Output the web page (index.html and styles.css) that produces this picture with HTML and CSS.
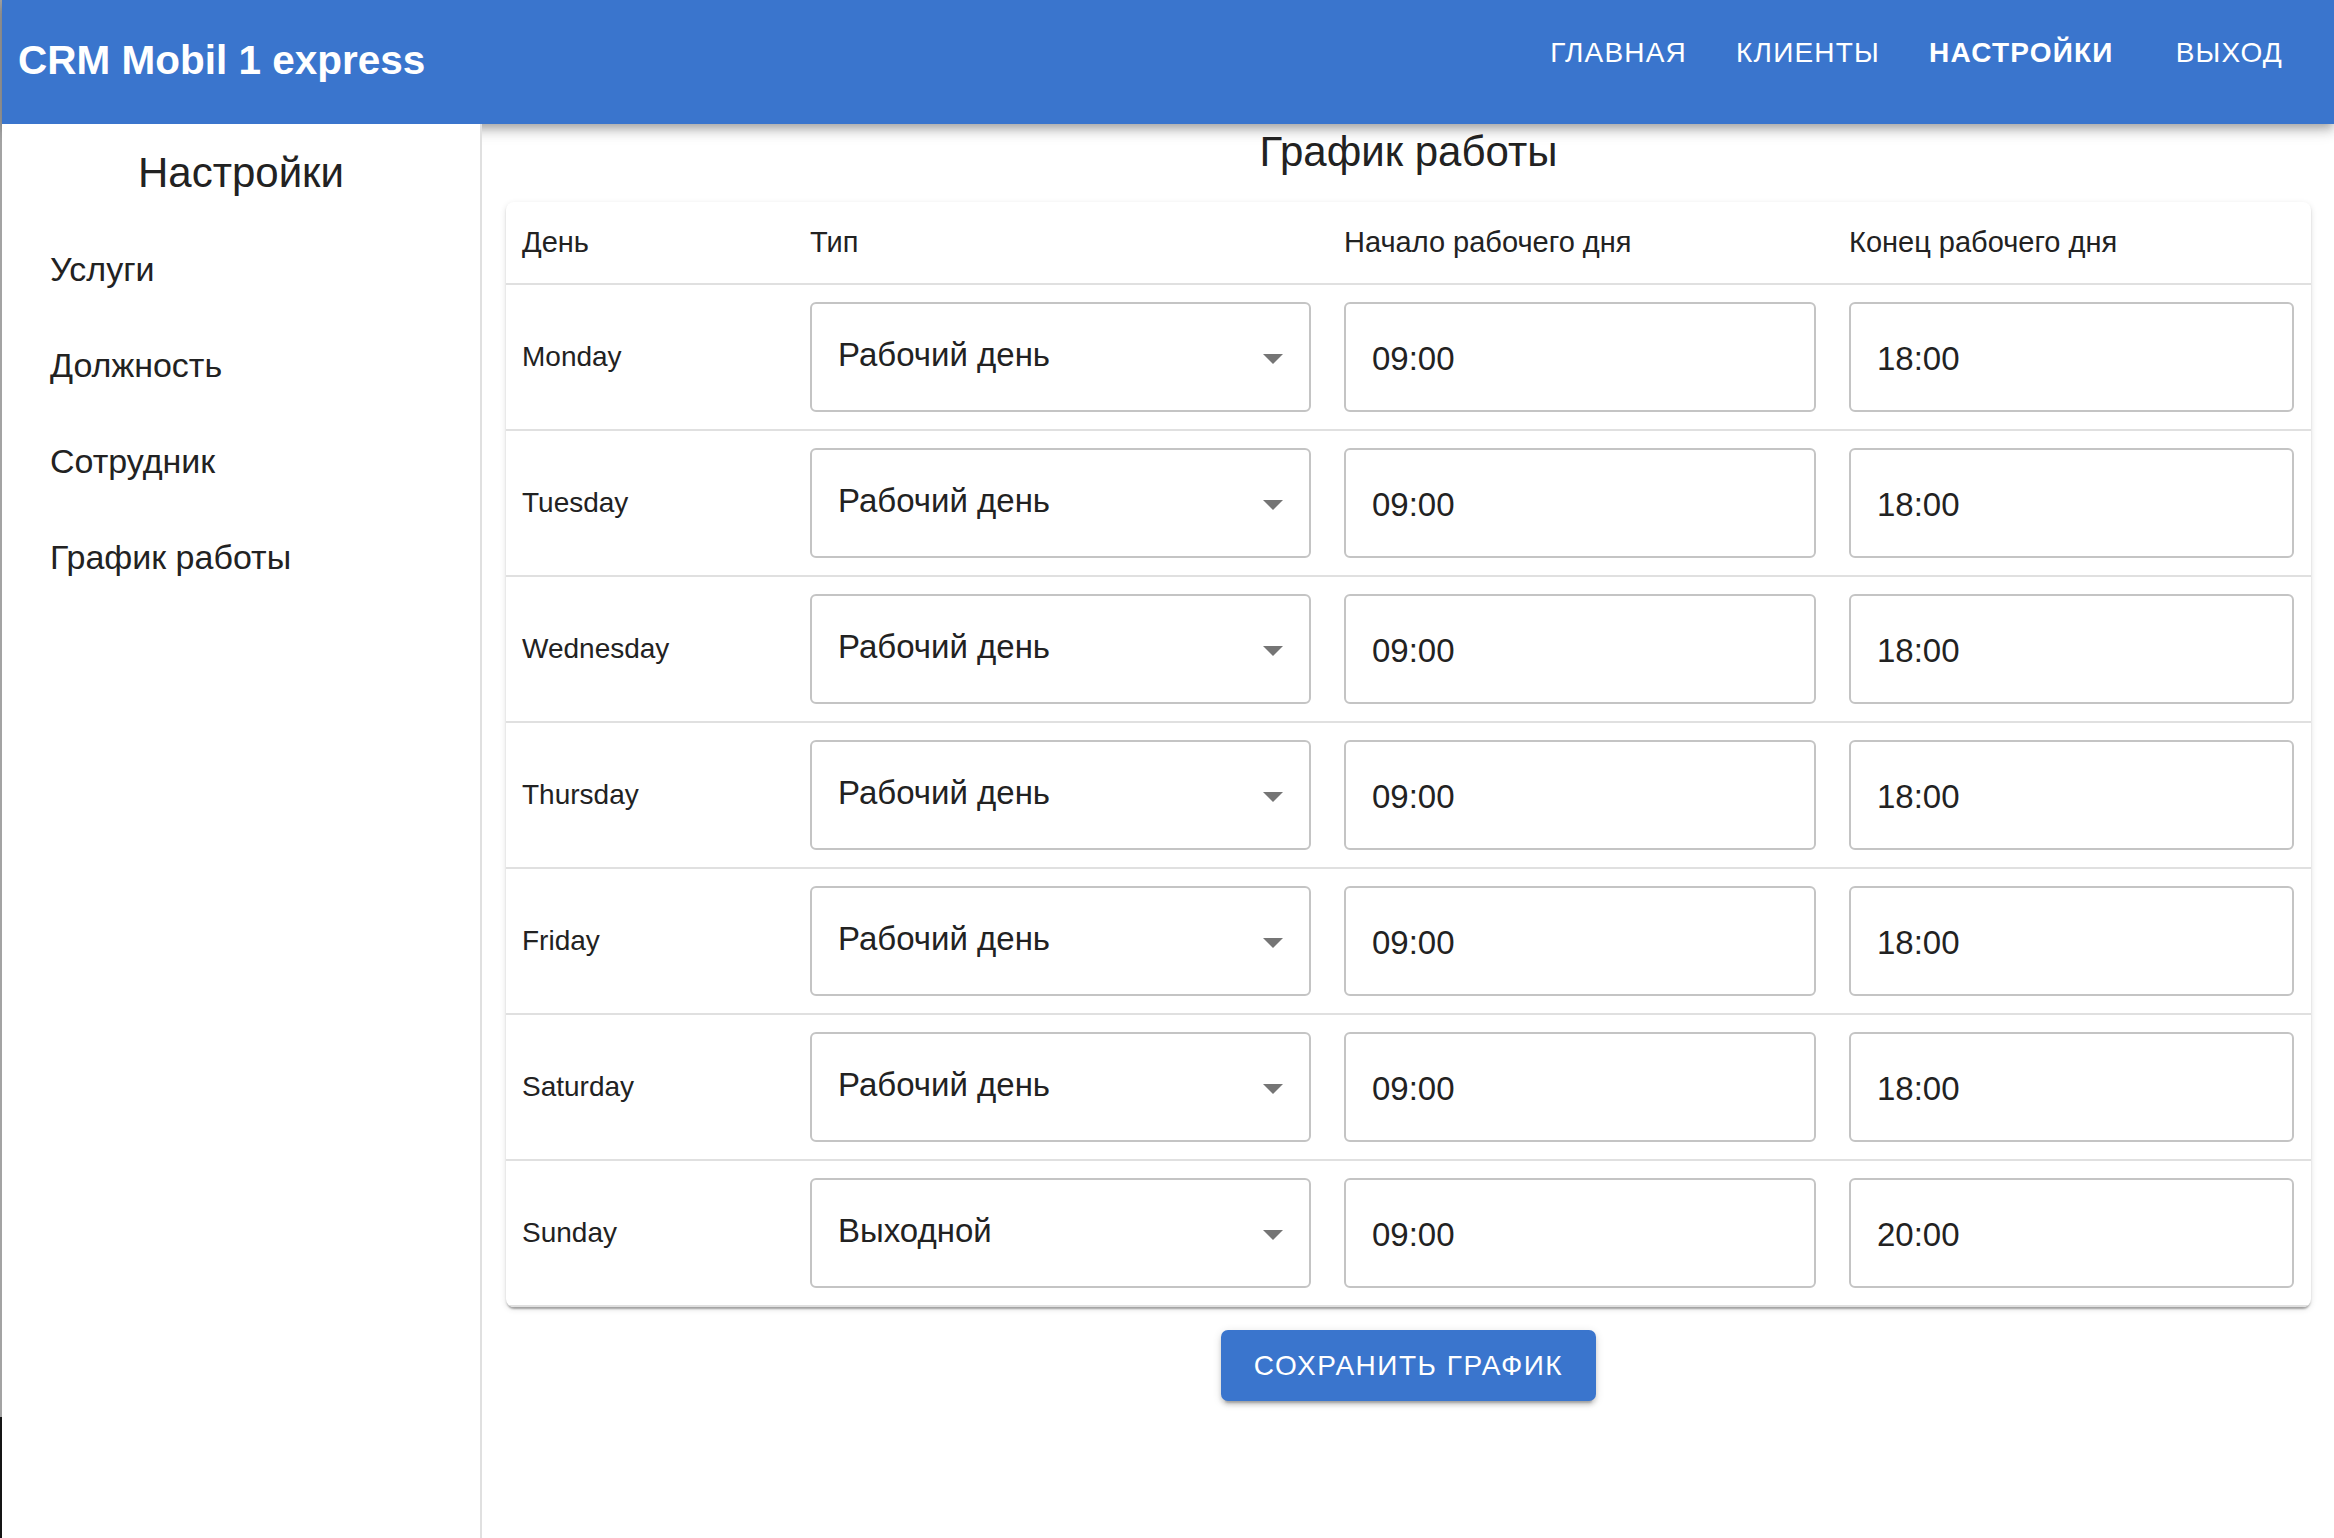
FILE: index.html
```html
<!DOCTYPE html>
<html lang="ru">
<head>
<meta charset="utf-8">
<title>CRM Mobil 1 express</title>
<link rel="stylesheet" href="styles.css">
</head>
<body>
<div class="app">
  <header class="appbar">
    <div class="brand">CRM Mobil 1 express</div>
    <nav class="nav">
      <a class="nav-item">ГЛАВНАЯ</a>
      <a class="nav-item">КЛИЕНТЫ</a>
      <a class="nav-item active">НАСТРОЙКИ</a>
      <a class="nav-item logout">ВЫХОД</a>
    </nav>
  </header>
  <div class="content">
    <aside class="sidebar">
      <div class="side-title">Настройки</div>
      <ul class="side-menu">
        <li>Услуги</li>
        <li>Должность</li>
        <li>Сотрудник</li>
        <li>График работы</li>
      </ul>
    </aside>
    <main class="main">
      <h1 class="page-title">График работы</h1>
      <div class="card">
        <table class="schedule">
          <colgroup>
            <col class="c-day"><col class="c-type"><col class="c-start"><col class="c-end">
          </colgroup>
          <thead>
            <tr><th>День</th><th>Тип</th><th>Начало рабочего дня</th><th>Конец рабочего дня</th></tr>
          </thead>
          <tbody>
            <tr><td class="day">Monday</td><td><div class="field select"><span class="val">Рабочий день</span><svg class="arrow" width="20" height="10" viewBox="0 0 20 10"><path d="M0 0h20L10 10z"/></svg></div></td><td><div class="field time"><span class="val">09:00</span></div></td><td><div class="field time"><span class="val">18:00</span></div></td></tr>
            <tr><td class="day">Tuesday</td><td><div class="field select"><span class="val">Рабочий день</span><svg class="arrow" width="20" height="10" viewBox="0 0 20 10"><path d="M0 0h20L10 10z"/></svg></div></td><td><div class="field time"><span class="val">09:00</span></div></td><td><div class="field time"><span class="val">18:00</span></div></td></tr>
            <tr><td class="day">Wednesday</td><td><div class="field select"><span class="val">Рабочий день</span><svg class="arrow" width="20" height="10" viewBox="0 0 20 10"><path d="M0 0h20L10 10z"/></svg></div></td><td><div class="field time"><span class="val">09:00</span></div></td><td><div class="field time"><span class="val">18:00</span></div></td></tr>
            <tr><td class="day">Thursday</td><td><div class="field select"><span class="val">Рабочий день</span><svg class="arrow" width="20" height="10" viewBox="0 0 20 10"><path d="M0 0h20L10 10z"/></svg></div></td><td><div class="field time"><span class="val">09:00</span></div></td><td><div class="field time"><span class="val">18:00</span></div></td></tr>
            <tr><td class="day">Friday</td><td><div class="field select"><span class="val">Рабочий день</span><svg class="arrow" width="20" height="10" viewBox="0 0 20 10"><path d="M0 0h20L10 10z"/></svg></div></td><td><div class="field time"><span class="val">09:00</span></div></td><td><div class="field time"><span class="val">18:00</span></div></td></tr>
            <tr><td class="day">Saturday</td><td><div class="field select"><span class="val">Рабочий день</span><svg class="arrow" width="20" height="10" viewBox="0 0 20 10"><path d="M0 0h20L10 10z"/></svg></div></td><td><div class="field time"><span class="val">09:00</span></div></td><td><div class="field time"><span class="val">18:00</span></div></td></tr>
            <tr><td class="day">Sunday</td><td><div class="field select"><span class="val">Выходной</span><svg class="arrow" width="20" height="10" viewBox="0 0 20 10"><path d="M0 0h20L10 10z"/></svg></div></td><td><div class="field time"><span class="val">09:00</span></div></td><td><div class="field time"><span class="val">20:00</span></div></td></tr>
          </tbody>
        </table>
      </div>
      <div class="actions">
        <button class="save-btn">СОХРАНИТЬ ГРАФИК</button>
      </div>
    </main>
  </div>
</div>
</body>
</html>
```
FILE: styles.css
```css
* { box-sizing: border-box; }
html, body { margin: 0; padding: 0; height: 100%; }
body {
  font-family: "Liberation Sans", Arial, Helvetica, sans-serif;
  color: #222;
  background: linear-gradient(to bottom, #a3a3a3 0, #a3a3a3 1417px, #151515 1417px);
  overflow: hidden;
}
.app {
  margin-left: 2px;
  min-height: 100vh;
  background: #fff;
  display: flex;
  flex-direction: column;
}
.appbar {
  position: relative;
  z-index: 1;
  height: 124px;
  background: #3a75cd;
  color: #fff;
  display: flex;
  align-items: flex-start;
  justify-content: space-between;
  padding: 0 51px 0 16px;
  box-shadow: 0 4px 8px -2px rgba(0,0,0,.2), 0 8px 10px 0 rgba(0,0,0,.14), 0 2px 20px 0 rgba(0,0,0,.12);
}
.brand {
  margin-top: 40px;
  font-size: 40.5px;
  line-height: 1;
  font-weight: 700;
}
.nav {
  margin-top: 39px;
  display: flex;
  gap: 49px;
}
.nav-item {
  font-size: 28px;
  line-height: 1;
  letter-spacing: 1.2px;
  color: #fff;
}
.nav-item.active { font-weight: 700; }
.nav-item.logout { margin-left: 13px; }

.content {
  flex: 1;
  display: flex;
}
.sidebar {
  position: relative;
  z-index: 2;
  width: 480px;
  flex: none;
  background: #fff;
  border-right: 2px solid #e0e0e0;
  min-height: 1414px;
}
.side-title {
  margin-top: 28px;
  text-align: center;
  font-size: 42px;
  line-height: 1;
}
.side-menu {
  list-style: none;
  margin: 27px 0 0;
  padding: 0 0 0 48px;
}
.side-menu li {
  font-size: 34px;
  line-height: 96px;
  height: 96px;
}

.main {
  flex: 1;
  padding: 0 23px 0 24px;
}
.page-title {
  margin: 7px 0 0;
  text-align: center;
  font-size: 42px;
  line-height: 1;
  font-weight: 400;
}
.card {
  margin-top: 29px;
  background: #fff;
  border-radius: 8px;
  box-shadow: 0 4px 2px -2px rgba(0,0,0,.2), 0 2px 2px 0 rgba(0,0,0,.14), 0 2px 6px 0 rgba(0,0,0,.12);
  overflow: hidden;
}
.schedule {
  width: 100%;
  border-collapse: collapse;
  table-layout: fixed;
}
.c-day { width: 288px; }
.c-type { width: 534px; }
.c-start { width: 505px; }
.c-end { width: 478px; }
.schedule th {
  height: 82px;
  text-align: left;
  font-weight: 400;
  font-size: 29px;
  padding: 0 16px;
  border-bottom: 2px solid #e0e0e0;
}
.schedule td {
  height: 146px;
  padding: 17px 17px 17px 16px;
  border-bottom: 2px solid #e0e0e0;
  font-size: 28px;
  vertical-align: middle;
}
.schedule td.day { padding-left: 16px; }
.field {
  height: 110px;
  border: 2px solid #c4c4c4;
  border-radius: 6px;
  display: flex;
  align-items: center;
  padding: 0 26px;
  font-size: 33px;
  color: #222;
}
.select .val { margin-bottom: 5px; }
.select .arrow {
  margin-left: auto;
  margin-top: 4px;
  fill: #757575;
  flex: none;
}
.time .val { margin-top: 4px; }

.actions {
  display: flex;
  justify-content: center;
  margin-top: 23px;
}
.save-btn {
  height: 71px;
  padding: 0 33px;
  border: none;
  border-radius: 7px;
  background: #3a75cd;
  color: #fff;
  font-family: inherit;
  font-size: 28px;
  letter-spacing: 1.5px;
  box-shadow: 0 6px 2px -4px rgba(0,0,0,.2), 0 4px 4px 0 rgba(0,0,0,.14), 0 2px 10px 0 rgba(0,0,0,.12);
}
```
